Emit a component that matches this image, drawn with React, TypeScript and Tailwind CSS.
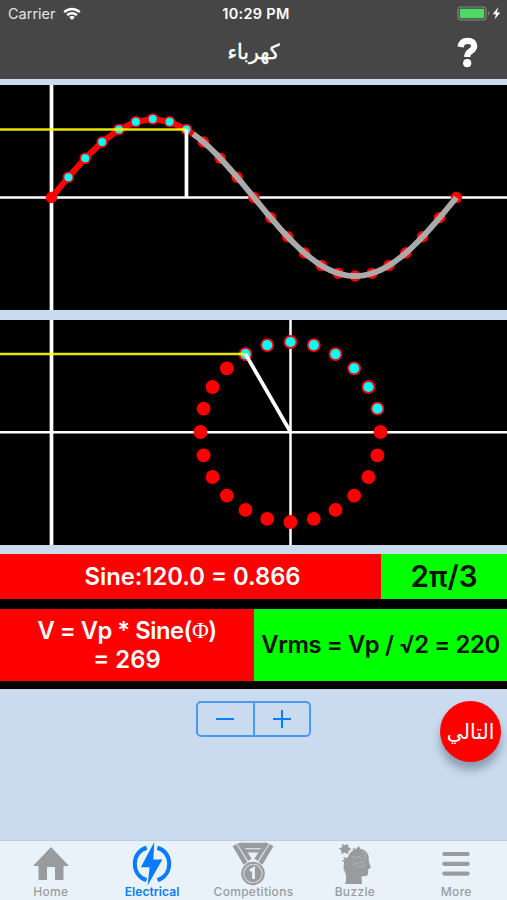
import type { ReactNode } from 'react';

const STEPS = 24;
const CURRENT = 8; // 120 degrees, 15 per step

const AXIS_X = 51.5;
const WAVE_Y = 112.5;
const STEP_WIDTH = 16.87;
const AMPLITUDE = 78.5;

const CIRCLE_X = 290.5;
const CIRCLE_Y = 112;
const RADIUS = 90;

const steps = Array.from({ length: STEPS + 1 }, (_, i) => i);
const angle = (step: number) => (step * 2 * Math.PI) / STEPS;

const wavePoint = (step: number) => ({
  x: AXIS_X + step * STEP_WIDTH,
  y: WAVE_Y - Math.sin(angle(step)) * AMPLITUDE,
});

const circlePoint = (step: number) => ({
  x: CIRCLE_X + Math.cos(angle(step)) * RADIUS,
  y: CIRCLE_Y - Math.sin(angle(step)) * RADIUS,
});

const toPoints = (list: number[]) =>
  list.map((s) => `${wavePoint(s).x},${wavePoint(s).y}`).join(' ');

function StatusBar() {
  return (
    <div className="relative flex h-7 items-center justify-between pl-2 pr-1 text-white">
      <div className="flex items-center gap-[7px]">
        <span className="text-[14.5px] leading-none text-[#e4e4e4]">Carrier</span>
        <svg width="18" height="14" viewBox="0 0 18 14" fill="none" stroke="white">
          <path d="M1.2 5.1C5.6.8 12.4.8 16.8 5.1" strokeWidth="2.5" />
          <path d="M4.1 8.2C6.9 5.6 11.1 5.6 13.9 8.2" strokeWidth="2.3" />
          <path d="M9 13L6.1 10.1C7.7 8.7 10.3 8.7 11.9 10.1Z" fill="white" stroke="none" />
        </svg>
      </div>
      <span className="absolute inset-x-0 text-center pl-[5px] text-[14.5px] font-semibold leading-none tracking-[0.3px]">
        10:29 PM
      </span>
      <svg width="46" height="16" viewBox="0 0 46 16">
        <rect x="1" y="1" width="28" height="13" rx="3" fill="none" stroke="#858585" strokeWidth="1.2" />
        <rect x="2.8" y="2.8" width="24.4" height="9.4" rx="1" fill="#4cd964" />
        <path d="M31 5.2C32.8 5.5 32.8 9 31 9.3Z" fill="#858585" />
        <path d="M41.5 1L35.6 8.2H39L37.5 13.6L43.3 6.4H39.8Z" fill="white" />
      </svg>
    </div>
  );
}

function Header() {
  return (
    <header className="h-[79px] shrink-0 bg-[#464646]">
      <StatusBar />
      <div className="grid h-[48px] grid-cols-[1fr_auto_1fr] items-center text-white">
        <span />
        <h1
          dir="rtl"
          className="pb-0.5 font-['Noto_Sans','DejaVu_Sans',sans-serif] text-[20.5px] font-medium leading-none [-webkit-text-stroke:0.4px_white]"
        >
          كهرباء
        </h1>
        <svg className="mr-[29px] justify-self-end" width="21" height="31" viewBox="0 0 21 31">
          <path
            d="M3.6 10C4.1 6 6.7 3.9 10.8 3.9C14.9 3.9 17.2 5.8 17.2 8.9C17.2 11.7 15.5 12.9 13.4 14.3C11 15.8 10.3 16.6 10.3 20"
            fill="none"
            stroke="white"
            strokeWidth="6.2"
          />
          <circle cx="10.2" cy="26.2" r="4.1" fill="white" />
        </svg>
      </div>
    </header>
  );
}

function WaveGraph() {
  const current = wavePoint(CURRENT);

  return (
    <svg className="block h-[225px] w-full bg-black" viewBox="0 0 507 225">
      <path d={`M0 ${WAVE_Y}H507`} stroke="white" strokeWidth="2.5" />
      <path d={`M${AXIS_X} 0V225`} stroke="white" strokeWidth="3.7" />
      {steps.map((s) => (
        <circle key={s} cx={wavePoint(s).x} cy={wavePoint(s).y} r="5.7" fill="#ff0000" />
      ))}
      <polyline
        points={toPoints([...steps.slice(0, CURRENT + 1), CURRENT + 0.5])}
        fill="none"
        stroke="#ff0000"
        strokeWidth="6"
      />
      <polyline
        points={toPoints([CURRENT + 0.4, ...Array.from({ length: 62 }, (_, i) => 8.75 + i * 0.25)])}
        fill="none"
        stroke="#aaaaaa"
        strokeWidth="5.8"
      />
      {steps.slice(1, CURRENT + 1).map((s) => (
        <circle key={s} cx={wavePoint(s).x} cy={wavePoint(s).y} r="4" fill="#00ffff" />
      ))}
      <path d={`M0 ${current.y}H${current.x}`} stroke="#ffff00" strokeWidth="2.5" strokeOpacity="0.9" />
      <path d={`M${current.x} ${current.y}V${WAVE_Y}`} stroke="white" strokeWidth="3.7" />
    </svg>
  );
}

function CircleGraph() {
  const current = circlePoint(CURRENT);

  return (
    <svg className="block h-[225px] w-full bg-black" viewBox="0 0 507 225">
      <path d={`M${AXIS_X} 0V225`} stroke="white" strokeWidth="3.7" />
      <path d={`M0 ${CIRCLE_Y + 0.3}H507M${CIRCLE_X} 0V225`} stroke="white" strokeWidth="2.5" />
      {steps.slice(0, STEPS).map((s) => (
        <circle key={s} cx={circlePoint(s).x} cy={circlePoint(s).y} r="6.9" fill="#ff0000" />
      ))}
      {steps.slice(1, CURRENT + 1).map((s) => (
        <circle key={s} cx={circlePoint(s).x} cy={circlePoint(s).y} r="5.1" fill="#00ffff" />
      ))}
      <path d={`M0 ${current.y}H${current.x}`} stroke="#ffff00" strokeWidth="2.5" strokeOpacity="0.9" />
      <path d={`M${current.x} ${current.y}L${CIRCLE_X} ${CIRCLE_Y}`} stroke="white" strokeWidth="3.7" />
    </svg>
  );
}

function Results() {
  return (
    <section className="bg-black pb-2 font-semibold">
      <div className="flex h-[45px]">
        <div className="flex w-[381px] items-center justify-center bg-[#ff0000] pl-1 text-[23.8px] text-white">
          Sine:120.0 = 0.866
        </div>
        <div className="flex flex-1 items-center justify-center bg-[#00ff00] text-[29.5px] text-[#001400]">
          2π/3
        </div>
      </div>
      <div className="mt-2.5 flex h-[72px]">
        <div className="flex w-[254px] flex-col items-center justify-center bg-[#ff0000] text-[23.8px] leading-[29px] tracking-[-0.5px] text-white">
          <span className="flex items-center whitespace-nowrap">
            V = Vp * Sine(
            <span className="font-['Liberation_Serif',serif] text-[23px] font-normal leading-none">Φ</span>)
          </span>
          <span className="tracking-normal">= 269</span>
        </div>
        <div className="flex flex-1 items-center justify-center whitespace-nowrap bg-[#00ff00] text-[23.8px] tracking-[-0.4px] text-[#001400]">
          Vrms = Vp / √2 = 220
        </div>
      </div>
    </section>
  );
}

function Controls() {
  return (
    <section className="relative flex flex-1 items-start justify-center pt-3">
      <div className="flex h-9 w-[115px] rounded-[5px] border-2 border-[#4b99f2] text-[#087cff]">
        <button className="flex flex-1 items-center justify-center border-r-2 border-[#4b99f2]" aria-label="Decrease">
          <svg width="20" height="20" viewBox="0 0 20 20">
            <path d="M1 10H19" stroke="currentColor" strokeWidth="2" />
          </svg>
        </button>
        <button className="flex flex-1 items-center justify-center" aria-label="Increase">
          <svg width="20" height="20" viewBox="0 0 20 20">
            <path d="M1 10H19M10 1V19" stroke="currentColor" strokeWidth="2" />
          </svg>
        </button>
      </div>
      <button
        dir="rtl"
        className="absolute right-1.5 top-3 flex size-[61px] items-center justify-center rounded-full bg-[#ff0000] pb-px font-['Noto_Sans','DejaVu_Sans',sans-serif] text-[20.5px] text-white shadow-[0_8px_9px_rgba(60,80,90,0.45)]"
      >
        التالي
      </button>
    </section>
  );
}

function HomeIcon() {
  return (
    <svg width="38" height="36" viewBox="0 0 38 36" fill="currentColor">
      <path d="M19 1L37 20H31.5V34H23V21H15V34H6.5V20H1Z" />
    </svg>
  );
}

function ElectricalIcon() {
  return (
    <svg width="40" height="44" viewBox="0 0 40 44" fill="none">
      <path
        d="M14.7 5.7C7 7.8 2.8 14.4 2.8 21.8C2.8 29.6 7.4 35.8 14.5 38.2M25.3 5.7C33 7.8 37.2 14.4 37.2 21.8C37.2 29.6 32.6 35.8 25.5 38.2"
        stroke="currentColor"
        strokeWidth="4"
      />
      <path d="M22.3 0L8.8 25.2H17.6L15.6 43.5L30.4 17.5H21.4Z" fill="currentColor" />
    </svg>
  );
}

function MedalIcon() {
  return (
    <svg width="42" height="44" viewBox="0 0 42 44" fill="currentColor">
      <path d="M9 .8H33L30 6.2H12ZM12.8 7.3H29.2L27.5 10.4H14.5Z" />
      <path d="M.6 4.2L4.4 2.1L15.5 20L11.6 22.7ZM5.1 1.8L9.2 .2L19.6 16.8L16.2 19Z" />
      <path d="M41.4 4.2L37.6 2.1L26.5 20L30.4 22.7ZM36.9 1.8L32.8 .2L22.4 16.8L25.8 19Z" />
      <circle cx="21" cy="31.5" r="11.8" />
      <circle cx="21" cy="31.5" r="9.2" fill="none" stroke="#d0d6da" strokeWidth="1.1" />
      <path d="M18 28.8L21.5 26.6V37" fill="none" stroke="#eaf2f9" strokeWidth="2.8" />
    </svg>
  );
}

function PuzzleHeadIcon() {
  return (
    <svg width="34" height="42" viewBox="0 0 34 42" fill="currentColor">
      <path d="M10 14C12 8 17 5 23 6C29 7 31.5 12 30.7 18L33 25L30.3 26L30 31C29.6 33.4 26.3 33.5 23.5 33.2L24 41H7.2C8.6 36 8.5 32.5 6.5 28C4.7 24.5 6 21 7.2 18Z" />
      <path d="M4 1L7 2.3L9.6 1L10.6 4.2L13.3 6L10.6 8.1L9.8 11.3L6.7 9.5L3.5 11.3L3.4 7.8L.9 5.5L4.2 4.3Z" />
      <path d="M14.5 5L18.2 6L20.8 3L22.7 6.6L26 8L22.8 10.2L23 14L19.2 12.2L15.5 13.5L16.3 9.3Z" />
      <path d="M5.3 14L9 15L12.4 13.5L13.4 16.8L16.5 18.6L13.4 20.8L13 24L9.2 22.3L5.7 23.5L6.2 19.6L3.8 17.3L6.7 16.7Z" />
      <path
        d="M14 13.5L17 15L21 13.5L23 16M15 17L17.5 20L15 23M18 21C21 18.5 25 20 27 17M18 22C21 25 26 24 28 21M25 8L28 12L26 16"
        fill="none"
        stroke="#c3c9cd"
        strokeWidth="0.6"
      />
    </svg>
  );
}

function MoreIcon() {
  return (
    <svg width="28" height="26" viewBox="0 0 28 26" stroke="currentColor" strokeWidth="4.2" strokeLinecap="round">
      <path d="M2.3 3H25.7M2.3 12.8H25.7M2.3 22.6H25.7" />
    </svg>
  );
}

const tabs: { label: string; icon: ReactNode; active?: boolean }[] = [
  { label: 'Home', icon: <HomeIcon /> },
  { label: 'Electrical', icon: <ElectricalIcon />, active: true },
  { label: 'Competitions', icon: <MedalIcon /> },
  { label: 'Buzzle', icon: <PuzzleHeadIcon /> },
  { label: 'More', icon: <MoreIcon /> },
];

function TabBar() {
  return (
    <nav className="grid h-[60px] shrink-0 grid-cols-5 border-t border-[#bfcddb] bg-[#eaf2f9]">
      {tabs.map((tab) => (
        <a
          key={tab.label}
          className={`flex flex-col items-center text-[12px] leading-none ${
            tab.active ? 'font-semibold tracking-[0.1px] text-[#087cff]' : 'font-medium tracking-[0.3px] text-[#999c9f]'
          }`}
        >
          <span className="flex h-[45px] items-center">{tab.icon}</span>
          {tab.label}
        </a>
      ))}
    </nav>
  );
}

export default function App() {
  return (
    <div className="flex h-screen w-full flex-col overflow-hidden bg-[#cadbf0] font-['Inter',sans-serif]">
      <Header />
      <main className="flex flex-1 flex-col pt-[6px]">
        <div className="flex flex-col gap-2.5 pb-[9px]">
          <WaveGraph />
          <CircleGraph />
        </div>
        <Results />
        <Controls />
      </main>
      <TabBar />
    </div>
  );
}
